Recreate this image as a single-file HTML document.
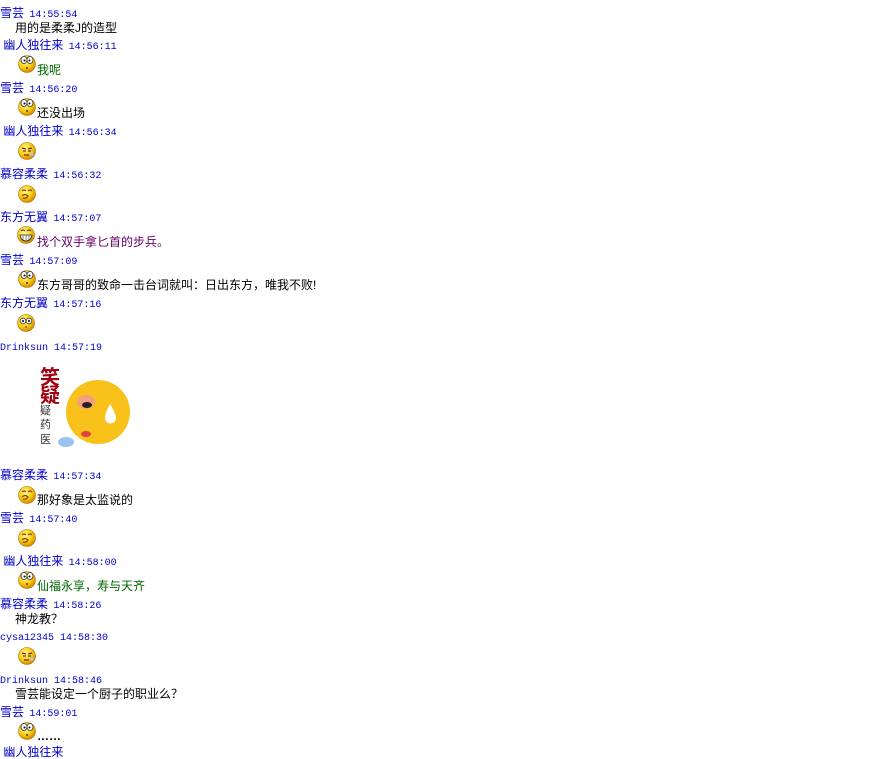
<!DOCTYPE html>
<html><head><meta charset="utf-8"><style>
body{margin:0;width:887px;height:750px;background:#fff;position:relative;overflow:hidden;font-family:"Liberation Sans","Noto Sans CJK SC","WenQuanYi Zen Hei",sans-serif;font-size:12px}
.h{position:absolute;left:0;color:#0000cc;line-height:14px;white-space:nowrap}
.h span{font-family:"Liberation Mono","DejaVu Sans Mono",monospace;font-size:10px;margin-left:2px}
.h span.m{margin-left:0}
.t{position:absolute;line-height:14px;white-space:nowrap;color:#000}
.e{position:absolute;left:17px;width:20px;height:20px}
</style></head><body>
<svg width="0" height="0" style="position:absolute"><defs>
<radialGradient id="g" cx="40%" cy="35%" r="65%"><stop offset="0" stop-color="#fff9a0"/><stop offset=".6" stop-color="#f7cc10"/><stop offset="1" stop-color="#d58a00"/></radialGradient>
<symbol id="f1" viewBox="0 0 20 20"><circle cx="10" cy="11" r="8.5" fill="url(#g)" stroke="#b07000" stroke-width=".6"/><ellipse cx="7" cy="7" rx="3" ry="3.6" fill="#fff" stroke="#333" stroke-width=".8"/><ellipse cx="13" cy="7" rx="3" ry="3.6" fill="#fff" stroke="#333" stroke-width=".8"/><circle cx="7.5" cy="7.5" r="1" fill="#000"/><circle cx="12.5" cy="7.5" r="1" fill="#000"/><circle cx="10" cy="15" r="1" fill="#630"/></symbol>
<symbol id="f2" viewBox="0 0 20 20"><circle cx="10" cy="11" r="8.5" fill="url(#g)" stroke="#b07000" stroke-width=".6"/><path d="M5 8l4 1M11 9l4-1M6 11h3M11 11h3M7 15h5" stroke="#600" stroke-width="1" fill="none"/><ellipse cx="15" cy="14" rx="1.5" ry="2" fill="#9cf"/></symbol>
<symbol id="f3" viewBox="0 0 20 20"><circle cx="10" cy="11" r="8.5" fill="url(#g)" stroke="#b07000" stroke-width=".6"/><path d="M5 8q2-2 4 0M11 8q2-2 4 0M5 13q3-3 6 0q-2 3-5 2" stroke="#840" stroke-width="1.2" fill="none"/></symbol>
<symbol id="f4" viewBox="0 0 20 20"><circle cx="10" cy="10" r="8.5" fill="url(#g)" stroke="#b07000" stroke-width=".6"/><path d="M5 6q2-2 4 0M11 6q2-2 4 0" stroke="#333" fill="none"/><path d="M4 10h12q-1 6-6 6q-5 0-6-6z" fill="#fff" stroke="#333" stroke-width=".8"/><path d="M7 10v5M10 10v6M13 10v5" stroke="#333" stroke-width=".6"/></symbol>
<symbol id="f5" viewBox="0 0 20 20"><circle cx="10" cy="11" r="8.5" fill="url(#g)" stroke="#b07000" stroke-width=".6"/><circle cx="7" cy="9" r="2.8" fill="#fff" stroke="#333" stroke-width=".8"/><circle cx="13" cy="9" r="2.8" fill="#fff" stroke="#333" stroke-width=".8"/><circle cx="7" cy="9" r="1" fill="#000"/><circle cx="13" cy="9" r="1" fill="#000"/><path d="M9 15h2" stroke="#630"/></symbol>
</defs></svg>

<div class="h" style="top:6px">雪芸 <span>14:55:54</span></div>
<div class="t" style="left:15px;top:21px">用的是柔柔J的造型</div>
<div class="h" style="top:38px">&nbsp;幽人独往来 <span>14:56:11</span></div>
<svg class="e" style="top:53px"><use href="#f1"/></svg>
<div class="t" style="left:37px;top:63px;color:#006600">我呢</div>
<div class="h" style="top:81px">雪芸 <span>14:56:20</span></div>
<svg class="e" style="top:96px"><use href="#f1"/></svg>
<div class="t" style="left:37px;top:106px">还没出场</div>
<div class="h" style="top:124px">&nbsp;幽人独往来 <span>14:56:34</span></div>
<svg class="e" style="top:140px"><use href="#f2"/></svg>
<div class="h" style="top:167px">慕容柔柔 <span>14:56:32</span></div>
<svg class="e" style="top:183px"><use href="#f3"/></svg>
<div class="h" style="top:210px">东方无翼 <span>14:57:07</span></div>
<svg class="e" style="top:225px;left:16px"><use href="#f4"/></svg>
<div class="t" style="left:37px;top:235px;color:#660066">找个双手拿匕首的步兵。</div>
<div class="h" style="top:253px">雪芸 <span>14:57:09</span></div>
<svg class="e" style="top:268px"><use href="#f1"/></svg>
<div class="t" style="left:37px;top:278px">东方哥哥的致命一击台词就叫：日出东方，唯我不败!</div>
<div class="h" style="top:296px">东方无翼 <span>14:57:16</span></div>
<svg class="e" style="top:312px;left:16px"><use href="#f5"/></svg>
<div class="h" style="top:339px"><span class="m">Drinksun 14:57:19</span></div>
<svg style="position:absolute;left:36px;top:362px" width="100" height="92">
<text x="4" y="22" font-size="20" font-weight="bold" fill="#a00010" font-family="Noto Sans CJK SC,sans-serif">笑</text>
<text x="4" y="40" font-size="20" font-weight="bold" fill="#a00010" font-family="Noto Sans CJK SC,sans-serif">疑</text>
<text x="4" y="52" font-size="11" fill="#333" font-family="Noto Sans CJK SC,sans-serif">疑</text>
<text x="4" y="66" font-size="11" fill="#333" font-family="Noto Sans CJK SC,sans-serif">药</text>
<text x="4" y="81" font-size="11" fill="#333" font-family="Noto Sans CJK SC,sans-serif">医</text>
<circle cx="62" cy="50" r="32" fill="#f9c21a"/>
<ellipse cx="50" cy="40" rx="9" ry="7" fill="#f4a080"/><ellipse cx="51" cy="43" rx="5" ry="3" fill="#222"/>
<path d="M74 42q6 10 6 14a5 5 0 0 1-11 0q0-5 5-14z" fill="#fff"/>
<ellipse cx="50" cy="72" rx="5" ry="3" fill="#e04040"/>
<ellipse cx="30" cy="80" rx="8" ry="5" fill="#9ac4f0"/>
</svg>
<div class="h" style="top:468px">慕容柔柔 <span>14:57:34</span></div>
<svg class="e" style="top:484px"><use href="#f3"/></svg>
<div class="t" style="left:37px;top:493px">那好象是太监说的</div>
<div class="h" style="top:511px">雪芸 <span>14:57:40</span></div>
<svg class="e" style="top:527px"><use href="#f3"/></svg>
<div class="h" style="top:554px">&nbsp;幽人独往来 <span>14:58:00</span></div>
<svg class="e" style="top:569px"><use href="#f1"/></svg>
<div class="t" style="left:37px;top:579px;color:#006600">仙福永享，寿与天齐</div>
<div class="h" style="top:597px">慕容柔柔 <span>14:58:26</span></div>
<div class="t" style="left:15px;top:612px">神龙教？</div>
<div class="h" style="top:629px"><span class="m">cysa12345 14:58:30</span></div>
<svg class="e" style="top:645px"><use href="#f2"/></svg>
<div class="h" style="top:672px"><span class="m">Drinksun 14:58:46</span></div>
<div class="t" style="left:15px;top:687px">雪芸能设定一个厨子的职业么？</div>
<div class="h" style="top:705px">雪芸 <span>14:59:01</span></div>
<svg class="e" style="top:720px"><use href="#f1"/></svg>
<div class="t" style="left:37px;top:729px;font-weight:bold">……</div>
<div class="h" style="top:745px">&nbsp;幽人独往来</div>
</body></html>
